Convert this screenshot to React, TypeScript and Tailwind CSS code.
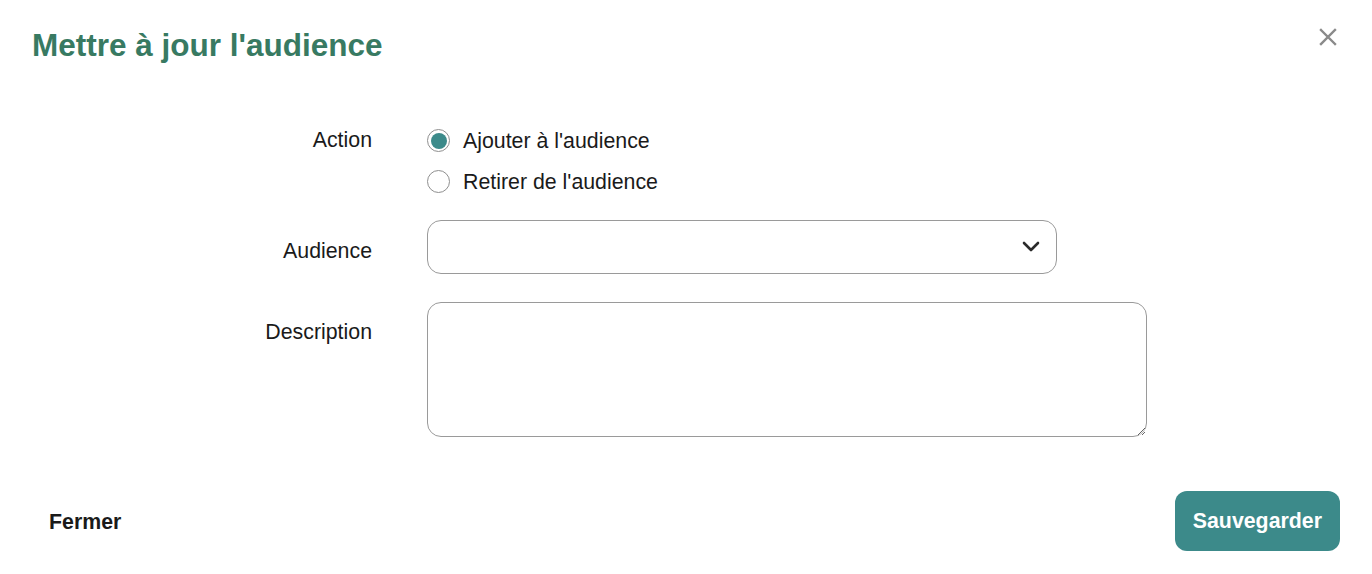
import { useState } from "react"

export default function App() {
   const [action, setAction] = useState("add")
   const [description, setDescription] = useState("")

   return (
      <div className="w-[1372px] h-[574px] bg-white text-[#1a1a1a] font-['Liberation_Sans',Arial,sans-serif] flex flex-col">
         <div className="flex items-start justify-between pl-[32px] pr-[30px] pt-[25px]">
            <h1 className="text-[31.5px] leading-[40px] font-bold text-[#387a62]">Mettre à jour l'audience</h1>
            <button className="mt-[-2px] w-[28px] h-[28px] flex items-center justify-center text-[#8a8a8a]">
               <svg width="18" height="18" viewBox="0 0 18 18" fill="none" stroke="currentColor" strokeWidth="2.4" strokeLinecap="square">
                  <path d="M2 2L16 16M16 2L2 16" />
               </svg>
            </button>
         </div>

         <div className="grid grid-cols-[340px_1fr] gap-x-[55px] pl-[32px] mt-[55px] text-[21.33px]">
            <label className="text-right leading-[41px] h-[41px]">Action</label>
            <div className="flex flex-col">
               {[
                  { value: "add", label: "Ajouter à l'audience" },
                  { value: "remove", label: "Retirer de l'audience" },
               ].map((o) => (
                  <label key={o.value} className="flex items-center h-[41px] cursor-pointer" onClick={() => setAction(o.value)}>
                     <span className="w-[23px] h-[23px] rounded-full border border-[#8f8f8f] flex items-center justify-center bg-white">
                        {action === o.value && <span className="w-[16px] h-[16px] rounded-full bg-[#3c8a8a]" />}
                     </span>
                     <span className="ml-[13px] leading-[41px] pt-[1px]">{o.label}</span>
                  </label>
               ))}
            </div>

            <label className="text-right leading-[54px] h-[54px] mt-[18px] pt-[4px]">Audience</label>
            <div className="relative w-[630px] mt-[18px]">
               <select className="appearance-none w-full h-[54px] rounded-[14px] border border-[#9a9a9a] bg-white px-[16px] outline-none">
                  <option value=""></option>
               </select>
               <svg className="absolute right-[17px] top-[21px] pointer-events-none" width="18" height="11" viewBox="0 0 18 11" fill="none" stroke="#2b2b2b" strokeWidth="2.6" strokeLinecap="round" strokeLinejoin="round">
                  <path d="M2 2L9 9L16 2" />
               </svg>
            </div>

            <label className="text-right leading-[41px] mt-[38px]">Description</label>
            <textarea
               value={description}
               onChange={(e) => setDescription(e.target.value)}
               className="mt-[28px] w-[720px] h-[135px] rounded-[14px] border border-[#9a9a9a] px-[16px] py-[12px] outline-none"
            />
         </div>

         <div className="mt-auto flex items-center justify-between pl-[32px] pr-[32px] pb-[23px]">
            <button className="px-[17px] h-[60px] pt-[3px] text-[21.33px] font-bold text-[#1a1a1a]">Fermer</button>
            <button className="h-[60px] px-[18px] pt-[1px] rounded-[12px] bg-[#3c8a8a] text-white text-[21.33px] font-bold">Sauvegarder</button>
         </div>
      </div>
   )
}
